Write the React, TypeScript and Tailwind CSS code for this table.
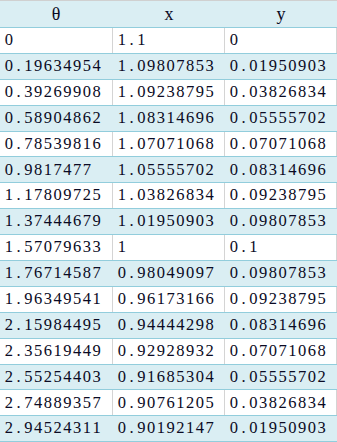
import React from "react";

const rows: [string, string, string][] = [
  ["0", "1.1", "0"],
  ["0.19634954", "1.09807853", "0.01950903"],
  ["0.39269908", "1.09238795", "0.03826834"],
  ["0.58904862", "1.08314696", "0.05555702"],
  ["0.78539816", "1.07071068", "0.07071068"],
  ["0.9817477", "1.05555702", "0.08314696"],
  ["1.17809725", "1.03826834", "0.09238795"],
  ["1.37444679", "1.01950903", "0.09807853"],
  ["1.57079633", "1", "0.1"],
  ["1.76714587", "0.98049097", "0.09807853"],
  ["1.96349541", "0.96173166", "0.09238795"],
  ["2.15984495", "0.94444298", "0.08314696"],
  ["2.35619449", "0.92928932", "0.07071068"],
  ["2.55254403", "0.91685304", "0.05555702"],
  ["2.74889357", "0.90761205", "0.03826834"],
  ["2.94524311", "0.90192147", "0.01950903"],
];

function Num({ v }: { v: string }) {
  return (
    <span className="inline-flex">
      {v.split("").map((c, i) => (
        <span key={i} className="inline-block w-[9.75px] text-center">
          {c}
        </span>
      ))}
    </span>
  );
}

export default function App() {
  return (
    <div
      className="w-[337px] h-[442px] overflow-hidden bg-white text-[#0a0a24] text-[16.5px]"
      style={{ fontFamily: '"Liberation Serif", "DejaVu Serif", serif' }}
    >
      <div className="border-t border-[#d0d0d0] bg-[#daeef3] border-b border-b-[#92cddc] h-[28px] grid grid-cols-[113px_112px_112px] items-center text-[18px]">
        <div className="text-center pr-[1px]">θ</div>
        <div className="text-center">x</div>
        <div className="text-center">y</div>
      </div>
      {rows.map((r, i) => {
        const blue = i % 2 === 1;
        return (
          <div
            key={i}
            className={`h-[25.9px] grid grid-cols-[113px_112px_112px] border-b border-[#92cddc] ${
              blue ? "bg-[#daeef3]" : "bg-white"
            }`}
          >
            {r.map((c, j) => (
              <div
                key={j}
                className={`flex items-center pl-[4px] border-r ${
                  blue ? "border-r-transparent" : "border-r-[#d4d4d4]"
                }`}
              >
                <Num v={c} />
              </div>
            ))}
          </div>
        );
      })}
    </div>
  );
}
